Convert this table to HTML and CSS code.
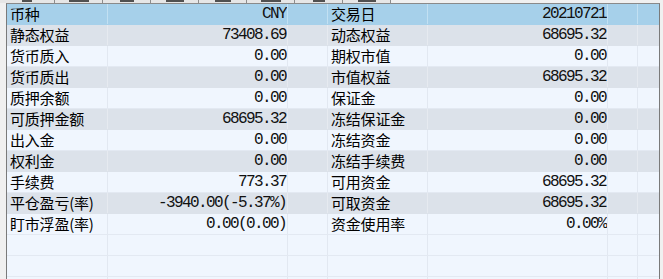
FILE: index.html
```html
<!DOCTYPE html>
<html lang="zh-CN">
<head>
<meta charset="utf-8">
<title>资金</title>
<link rel="stylesheet" href="styles.css">
</head>
<body>
<div class="tabstrip">
  <div class="tab first"><i class="mk w10"></i></div>
  <div class="tab"><i class="mk w20"></i></div>
  <div class="tab"><i class="mk w14"></i></div>
  <div class="tab"><i class="mk w18"></i></div>
  <div class="tab"><i class="mk w16"></i></div>
  <div class="tab"><i class="mk w20"></i></div>
  <div class="tab"><i class="mk w12"></i></div>
  <div class="tab"><i class="mk w18"></i></div>
</div>
<div class="grid">
  <div class="row head">
    <div class="c lbl">币种</div><div class="c num">CNY</div><div class="c"></div>
    <div class="c lbl">交易日</div><div class="c num">20210721</div><div class="c"></div><div class="c last"></div>
  </div>
  <div class="row alt">
    <div class="c lbl">静态权益</div><div class="c num">73408.69</div><div class="c"></div>
    <div class="c lbl">动态权益</div><div class="c num">68695.32</div><div class="c"></div><div class="c last"></div>
  </div>
  <div class="row">
    <div class="c lbl">货币质入</div><div class="c num">0.00</div><div class="c"></div>
    <div class="c lbl">期权市值</div><div class="c num">0.00</div><div class="c"></div><div class="c last"></div>
  </div>
  <div class="row alt">
    <div class="c lbl">货币质出</div><div class="c num">0.00</div><div class="c"></div>
    <div class="c lbl">市值权益</div><div class="c num">68695.32</div><div class="c"></div><div class="c last"></div>
  </div>
  <div class="row">
    <div class="c lbl">质押余额</div><div class="c num">0.00</div><div class="c"></div>
    <div class="c lbl">保证金</div><div class="c num">0.00</div><div class="c"></div><div class="c last"></div>
  </div>
  <div class="row alt">
    <div class="c lbl">可质押金额</div><div class="c num">68695.32</div><div class="c"></div>
    <div class="c lbl">冻结保证金</div><div class="c num">0.00</div><div class="c"></div><div class="c last"></div>
  </div>
  <div class="row">
    <div class="c lbl">出入金</div><div class="c num">0.00</div><div class="c"></div>
    <div class="c lbl">冻结资金</div><div class="c num">0.00</div><div class="c"></div><div class="c last"></div>
  </div>
  <div class="row alt">
    <div class="c lbl">权利金</div><div class="c num">0.00</div><div class="c"></div>
    <div class="c lbl">冻结手续费</div><div class="c num">0.00</div><div class="c"></div><div class="c last"></div>
  </div>
  <div class="row">
    <div class="c lbl">手续费</div><div class="c num">773.37</div><div class="c"></div>
    <div class="c lbl">可用资金</div><div class="c num">68695.32</div><div class="c"></div><div class="c last"></div>
  </div>
  <div class="row alt">
    <div class="c lbl">平仓盈亏(率)</div><div class="c num">-3940.00(-5.37%)</div><div class="c"></div>
    <div class="c lbl">可取资金</div><div class="c num">68695.32</div><div class="c"></div><div class="c last"></div>
  </div>
  <div class="row">
    <div class="c lbl">盯市浮盈(率)</div><div class="c num">0.00(0.00)</div><div class="c"></div>
    <div class="c lbl">资金使用率</div><div class="c num">0.00%</div><div class="c"></div><div class="c last"></div>
  </div>
  <div class="row">
    <div class="c lbl"></div><div class="c num"></div><div class="c"></div>
    <div class="c lbl"></div><div class="c num"></div><div class="c"></div><div class="c last"></div>
  </div>
  <div class="row">
    <div class="c lbl"></div><div class="c num"></div><div class="c"></div>
    <div class="c lbl"></div><div class="c num"></div><div class="c"></div><div class="c last"></div>
  </div>
  <div class="row">
    <div class="c lbl"></div><div class="c num"></div><div class="c"></div>
    <div class="c lbl"></div><div class="c num"></div><div class="c"></div><div class="c last"></div>
  </div>
</div>
</body>
</html>
```

FILE: styles.css
```css
html, body {
  margin: 0;
  padding: 0;
  background: #f0f0f0;
  overflow: hidden;
}
body {
  width: 663px;
  height: 279px;
  font-family: "Noto Sans CJK SC", "Noto Sans", sans-serif;
  color: #000;
}
.tabstrip {
  height: 3px;
  display: flex;
  overflow: hidden;
  background: #f0f0f0;
}
.tab {
  width: 48px;
  height: 3px;
  box-sizing: border-box;
  border-right: 1px solid #8c8c8c;
  background: #e6e6e6;
  display: flex;
  justify-content: center;
}
.tab.first {
  width: 55px;
}
.mk {
  display: block;
  height: 2px;
  background: #505050;
}
.w10 { width: 10px; }
.w12 { width: 12px; }
.w14 { width: 14px; }
.w16 { width: 16px; }
.w18 { width: 18px; }
.w20 { width: 20px; }
.grid {
  margin-left: 6px;
  width: 654px;
  height: 276px;
  overflow: hidden;
  box-sizing: border-box;
  border-top: 1px solid #8a8a8a;
  border-left: 1px solid #7a7a7a;
  border-right: 1px solid #7a7a7a;
  background: #f0f6fe;
}
.row {
  display: grid;
  grid-template-columns: 101px 180px 40px 100px 180px 30px 21px;
  height: 21px;
  box-sizing: border-box;
  border-bottom: 1px solid #e3e9f2;
  background: #f0f6fe;
}
.row.alt {
  background: #dce2ea;
  border-bottom-color: #dce2ea;
}
.row.head {
  background: #a6d0ea;
  border-bottom-color: #a6d0ea;
}
.c {
  box-sizing: border-box;
  border-right: 1px solid #e2e8f1;
  height: 20px;
  line-height: 20px;
  white-space: nowrap;
  overflow: hidden;
}
.row.alt .c {
  border-right-color: #e6eaf0;
}
.row.head .c {
  border-right-color: #c2e0f2;
}
.c.last {
  border-right: none;
}
.lbl {
  font-size: 15px;
  padding-left: 3px;
  letter-spacing: -0.2px;
}
.num {
  font-family: "Liberation Mono", "DejaVu Sans Mono", monospace;
  font-size: 16px;
  letter-spacing: -1.6px;
  text-align: right;
  padding-right: 1px;
  color: #111;
}
```
